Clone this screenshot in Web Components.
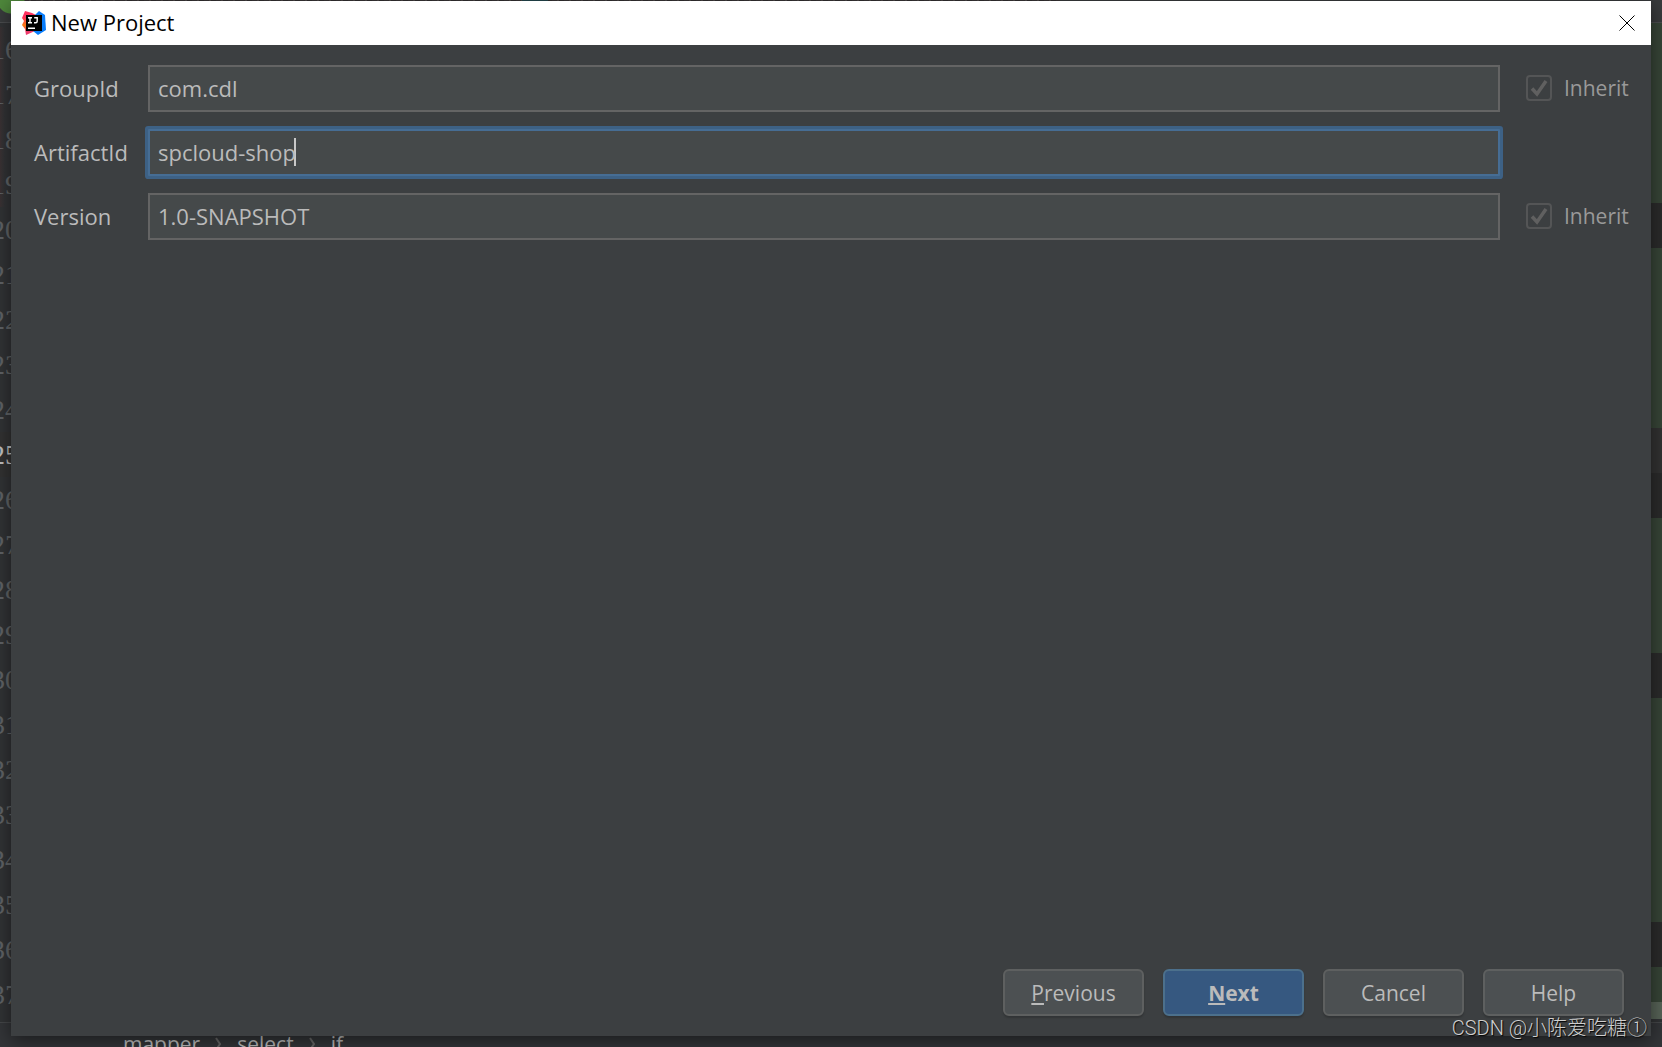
<!DOCTYPE html>
<html lang="en">
<head>
<meta charset="utf-8">
<title>New Project</title>
<style>
  html, body { height: 100%; margin: 0; }
  body {
    background: #313335; color: #bbbbbb; overflow: hidden; position: relative;
    font-family: "Open Sans", "Noto Sans", "Noto Sans CJK SC", sans-serif;
    font-size: 22px; line-height: 30px;
  }
</style>
</head>
<body>
<ide-backdrop></ide-backdrop>
<project-dialog heading="New Project">
  <form-row label="GroupId" value="com.cdl" inherit></form-row>
  <form-row label="ArtifactId" value="spcloud-shop" active></form-row>
  <form-row label="Version" value="1.0-SNAPSHOT" inherit></form-row>
  <dialog-button slot="actions" mnemonic="P" rest="revious"></dialog-button>
  <dialog-button slot="actions" mnemonic="N" rest="ext" primary></dialog-button>
  <dialog-button slot="actions" rest="Cancel"></dialog-button>
  <dialog-button slot="actions" rest="Help"></dialog-button>
</project-dialog>
<water-mark>CSDN @小陈爱吃糖①</water-mark>

<script>
class IdeBackdrop extends HTMLElement {
  connectedCallback() {
    const numbers = Array.from({ length: 22 }, (_, i) => i + 16)
      .map(n => `<li class="${n < 20 ? 'changed' : ''}${n === 25 ? 'current' : ''}">${n}</li>`).join('');
    const bands = [['g', 180], ['d', 45], ['g', 180], ['m', 45], ['d', 45], ['g', 135], ['d', 45], ['g', 224], ['d', 45], ['g', 35], ['s', 17], ['b', 5]]
      .map(([kind, h]) => `<i class="${kind}" style="height:${h}px"></i>`).join('');
    this.attachShadow({ mode: 'open' }).innerHTML = `
      <style>
        :host { display: flex; flex-direction: column; height: 100%; overflow: hidden; }
        .tabs {
          flex: none; height: 22px; border-bottom: 1px solid #4b4d4f;
          background: radial-gradient(circle at 11px 0, #4f883c 13px, transparent 14px),
            linear-gradient(90deg, transparent 522px, #24484f 522px 548px, transparent 548px) 0 0 / 100% 1px no-repeat,
            repeating-linear-gradient(90deg, #3a3637 0 5px, #4a4646 5px 7px, #333031 7px 12px) 0 0 / 1060px 1px no-repeat,
            #393b3d;
        }
        .body { flex: 1; min-height: 0; display: flex; justify-content: space-between; overflow: hidden; }
        ol { list-style: none; margin: 0 0 0 -9px; padding: 4px 0 0; width: 44px; background: #313335;
          font: 28px/45px "Liberation Serif", serif; color: #606366; }
        .changed { background: linear-gradient(90deg, #4c3032, #313335 14px); }
        .current { color: #c0c0c0; background: #323232; }
        .bands { width: 44px; display: flex; flex-direction: column; }
        .bands i { flex: none; }
        .g { background: #374537; } .d { background: #2b2b2b; } .m { background: #323232; }
        .s { background: #586458; } .b { background: #313335; }
        nav { flex: none; box-sizing: border-box; height: 25px; border-top: 1px solid #454749; background: #333538;
          display: flex; gap: 15px; padding: 4px 0 0 123px; font-size: 21px; line-height: 34px; overflow: hidden; }
        nav svg { width: 7px; height: 14px; margin-top: 10px; fill: none; stroke: #666; stroke-width: 2; }
      </style>
      <div class="tabs"></div>
      <div class="body"><ol>${numbers}</ol><div class="bands">${bands}</div></div>
      <nav><span>mapper</span><svg viewBox="0 0 7 14"><path d="M1 1l4 6-4 6"/></svg>
      <span>select</span><svg viewBox="0 0 7 14"><path d="M1 1l4 6-4 6"/></svg><span>if</span></nav>`;
  }
}

class ProjectDialog extends HTMLElement {
  connectedCallback() {
    this.attachShadow({ mode: 'open' }).innerHTML = `
      <style>
        :host { position: absolute; inset: 1px 11px 11px; display: flex; flex-direction: column;
          background: #3c3f41; box-shadow: 0 4px 18px rgba(0,0,0,.5); }
        header { flex: none; height: 44px; display: flex; align-items: center; gap: 5px; padding: 0 16px 0 11px;
          background: #fff; color: #000; }
        h1 { flex: 1; margin: 0; padding-bottom: 3px; font-size: 22px; font-weight: 400; line-height: 30px; }
        .logo { width: 24px; height: 24px; }
        button { border: 0; padding: 0 0 1px; background: none; display: grid; }
        main { flex: 1; display: flex; flex-direction: column; gap: 17px; padding: 20px 22px 0 23px; }
        footer { display: flex; justify-content: flex-end; gap: 19px; padding: 0 27px 20px; }
      </style>
      <header>
        <svg class="logo" viewBox="0 0 24 24" aria-hidden="true">
          <defs><linearGradient id="warm" x2="0" y2="1"><stop offset=".25" stop-color="#fe315d"/><stop offset=".6" stop-color="#f97a12"/><stop offset=".85" stop-color="#ef3a6c"/></linearGradient></defs>
          <path fill="url(#warm)" d="M3 0l7 2 4 2-1 16-9 4-1-6-3-4 2-4-2-3z"/>
          <path fill="#087cfa" d="M17 0l6 4 1 15-8 5-5-4 2-16z"/>
          <path d="M4 4h16v16H4z"/>
          <path fill="none" stroke="#fff" stroke-width="1.4" d="M6 6.7h4M8 6.7v5M6 11.7h4M12.200 6.700h3v3.600q0 1.500-1.500 1.500h-1.700"/>
          <path fill="#fff" d="M6 16.500h7v1.500H6z"/>
        </svg>
        <h1>${this.getAttribute('heading')}</h1>
        <button type="button" aria-label="Close"><svg width="16" height="16" viewBox="0 0 16 16"><path d="M.5.5l15 15M15.500.5l-15 15" stroke="#000" stroke-width="1"/></svg></button>
      </header>
      <main><slot></slot></main>
      <footer><slot name="actions"></slot></footer>`;
  }
}

class FormRow extends HTMLElement {
  connectedCallback() {
    const inherit = this.hasAttribute('inherit') ? `
      <label class="inherit"><span class="tick"><input type="checkbox" checked disabled>
        <svg viewBox="0 0 26 26" aria-hidden="true"><path d="M6 13.500l5 5.500L20 6"/></svg></span>Inherit</label>` : '';
    this.attachShadow({ mode: 'open' }).innerHTML = `
      <style>
        :host { display: grid; grid-template-columns: 114px minmax(0, 1fr) 103px; align-items: center; }
        .name { padding-bottom: 2px; }
        #field { box-sizing: border-box; height: 47px; width: calc(100% - 26px); padding: 0 8px 2px; border: 2px solid #646464; border-radius: 0;
          background: #45494a; color: #bbbbbb; font: inherit; outline: none; }
        :host([active]) #field { border-color: #466d94; box-shadow: 0 0 0 3px #3d6185; border-radius: 1px; caret-color: transparent;
          background: linear-gradient(#c8c8c8, #c8c8c8) 144px 7px / 2px 28px no-repeat #45494a; }
        .inherit { display: flex; align-items: center; gap: 12px; padding-bottom: 1px; color: #999999; font-size: 21px; white-space: nowrap; }
        .tick { display: grid; width: 26px; height: 26px; }
        .tick > * { grid-area: 1 / 1; margin: 0; width: 26px; height: 26px; }
        .tick input { appearance: none; box-sizing: border-box; border: 2px solid #545556; border-radius: 4px; }
        .tick svg { fill: none; stroke: #606060; stroke-width: 3.500; }
      </style>
      <label class="name" for="field">${this.getAttribute('label')}</label>
      <input id="field" type="text" spellcheck="false" value="${this.getAttribute('value')}">${inherit}`;
  }
}

class DialogButton extends HTMLElement {
  connectedCallback() {
    const key = this.getAttribute('mnemonic');
    this.attachShadow({ mode: 'open' }).innerHTML = `
      <style>
        :host { display: block; }
        button { display: block; box-sizing: border-box; width: 141px; height: 47px; padding: 0; border: 2px solid #5e6060; border-radius: 6px;
          background: #4c5052; color: #bbbbbb; font: inherit; font-size: 21px; box-shadow: 0 2px 2px rgba(0,0,0,.18); }
        :host([primary]) button { background: #365880; border-color: #4c708c; font-weight: 700; }
        u { text-decoration-thickness: 2px; text-underline-offset: 2px; }
      </style>
      <button type="button">${key ? `<u>${key}</u>` : ''}${this.getAttribute('rest')}</button>`;
  }
}

class WaterMark extends HTMLElement {
  connectedCallback() {
    this.attachShadow({ mode: 'open' }).innerHTML = `
      <style>
        :host { position: absolute; right: 15px; bottom: 5px; color: #cfcfcf; white-space: nowrap;
          font: 300 20px/28px Roboto, "Noto Sans CJK SC", sans-serif; text-shadow: 1px 1px 1px #000; }
      </style><slot></slot>`;
  }
}

customElements.define('ide-backdrop', IdeBackdrop);
customElements.define('project-dialog', ProjectDialog);
customElements.define('form-row', FormRow);
customElements.define('dialog-button', DialogButton);
customElements.define('water-mark', WaterMark);
</script>
</body>
</html>
